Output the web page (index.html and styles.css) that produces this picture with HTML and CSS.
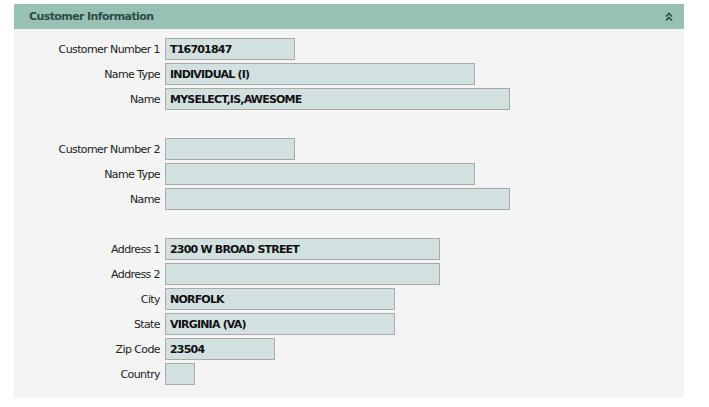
FILE: index.html
```html
<!DOCTYPE html>
<html>
<head>
<meta charset="utf-8">
<link rel="stylesheet" href="styles.css">
</head>
<body>
<div class="panel">
  <div class="panel-header">
    <span class="title">Customer Information</span>
    <svg class="collapse" width="8" height="10" viewBox="0 0 8 10"><path d="M1 4.5 L4 1.5 L7 4.5 M1 8.5 L4 5.5 L7 8.5" fill="none" stroke="#2e4c48" stroke-width="1.6"/></svg>
  </div>
  <div class="panel-body">
    <div class="row"><label>Customer Number 1</label><div class="field w130">T16701847</div></div>
    <div class="row"><label>Name Type</label><div class="field w310">INDIVIDUAL (I)</div></div>
    <div class="row"><label>Name</label><div class="field w345">MYSELECT,IS,AWESOME</div></div>
    <div class="spacer"></div>
    <div class="row"><label>Customer Number 2</label><div class="field w130"></div></div>
    <div class="row"><label>Name Type</label><div class="field w310"></div></div>
    <div class="row"><label>Name</label><div class="field w345"></div></div>
    <div class="spacer"></div>
    <div class="row"><label>Address 1</label><div class="field w275">2300 W BROAD STREET</div></div>
    <div class="row"><label>Address 2</label><div class="field w275"></div></div>
    <div class="row"><label>City</label><div class="field w230">NORFOLK</div></div>
    <div class="row"><label>State</label><div class="field w230">VIRGINIA (VA)</div></div>
    <div class="row"><label>Zip Code</label><div class="field w110">23504</div></div>
    <div class="row"><label>Country</label><div class="field w30"></div></div>
  </div>
</div>
</body>
</html>
```
FILE: styles.css
```css
html, body { margin: 0; padding: 0; background: #ffffff; }
body { padding: 4px 25px 0 14px; font-family: "DejaVu Sans", Verdana, sans-serif; font-size: 11px; color: #222; }
.panel { width: 670px; }
.panel-header {
  height: 25px; background: #97c1b5; display: flex; align-items: center;
  justify-content: space-between; padding: 1px 11px 0 15px; box-sizing: border-box;
}
.title { font-weight: bold; color: #2e4c48; font-size: 11px; letter-spacing: -0.6px; line-height: 24px; }
.collapse { display: block; }
.panel-body { background: #f4f4f4; padding: 9px 0 10px; }
.row { display: flex; align-items: flex-start; height: 22px; margin-bottom: 3px; }
.spacer { height: 25px; }
.row label { width: 146px; text-align: right; padding: 1px 5px 0 0; color: #222; letter-spacing: -0.6px; line-height: 22px; }
.field {
  height: 22px; box-sizing: border-box; background: #d2e0e0; border: 1px solid #a7a9aa;
  font-weight: bold; color: #111; padding: 0 4px; line-height: 21px; letter-spacing: -0.8px;
  white-space: nowrap; overflow: hidden;
}
.w130 { width: 130px; }
.w310 { width: 310px; }
.w345 { width: 345px; }
.w275 { width: 275px; }
.w230 { width: 230px; }
.w110 { width: 110px; }
.w30 { width: 30px; }
```
